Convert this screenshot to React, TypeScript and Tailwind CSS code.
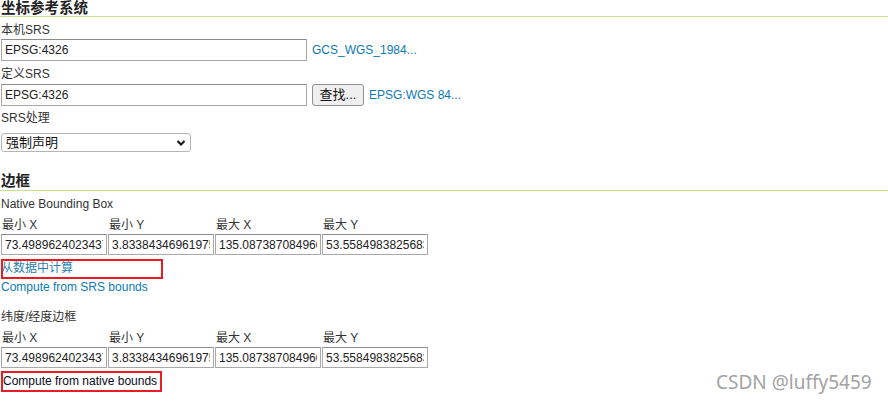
import React from "react";

const font = { fontFamily: '"Liberation Sans", "Noto Sans CJK SC", sans-serif' };

function Label(props: { children: React.ReactNode; className?: string }) {
  return <div className={`text-[12px] leading-[16px] text-[#333] ${props.className ?? ""}`}>{props.children}</div>;
}

function Heading(props: { children: React.ReactNode; className?: string }) {
  return (
    <div className={`font-bold text-[14.5px] leading-[16px] text-[#222] border-b border-[#c6df9f] pl-[1px] ${props.className ?? ""}`}>
      {props.children}
    </div>
  );
}

function TextBox(props: { value: string; className?: string }) {
  return (
    <input
      readOnly
      value={props.value}
      className={`h-[21px] border border-[#a9a9a9] border-t-[#8c8c8c] bg-white px-[3px] text-[12px] text-[#222] outline-none ${props.className ?? ""}`}
      style={font}
    />
  );
}

function BBox() {
  const cols = [
    { label: "最小 X", value: "73.4989624023437" },
    { label: "最小 Y", value: "3.83384346961975" },
    { label: "最大 X", value: "135.087387084960" },
    { label: "最大 Y", value: "53.5584983825683" },
  ];
  return (
    <div className="flex gap-[1px]">
      {cols.map((c) => (
        <div key={c.label} className="flex flex-col w-[106px]">
          <Label className="h-[17px] pl-[1px]">{c.label}</Label>
          <TextBox value={c.value} className="w-[106px] h-[21px] px-[3px]" />
        </div>
      ))}
    </div>
  );
}

export default function App() {
  return (
    <div className="relative w-[888px] h-[407px] bg-white overflow-hidden" style={font}>
      <Heading className="h-[17px]">坐标参考系统</Heading>

      <Label className="mt-[5px] pl-[1px]">本机SRS</Label>
      <div className="flex items-center mt-[1px] ml-[1px]">
        <TextBox value="EPSG:4326" className="w-[306px] h-[22px]" />
        <a className="ml-[5px] text-[12px] text-[#0d7ab4]">GCS_WGS_1984...</a>
      </div>

      <Label className="mt-[5px] pl-[1px]">定义SRS</Label>
      <div className="flex items-center mt-[2px] ml-[1px]">
        <TextBox value="EPSG:4326" className="w-[306px] h-[22px]" />
        <button className="ml-[5px] h-[22px] w-[52px] border border-[#8f8f8f] rounded-[3px] bg-[#efefef] text-[13px] text-[#111]">
          查找...
        </button>
        <a className="ml-[5px] text-[12px] text-[#0d7ab4]">EPSG:WGS 84...</a>
      </div>

      <Label className="mt-[4px] pl-[1px]">SRS处理</Label>
      <div className="mt-[7px] ml-[1px] w-[190px] h-[19px] border border-[#b5b5b5] rounded-[3px] flex items-center justify-between px-[4px] bg-white">
        <span className="text-[13px] text-[#111] leading-[16px]">强制声明</span>
        <svg width="10" height="8" viewBox="0 0 10 8">
          <path d="M1.5 2 L5 5.5 L8.5 2" fill="none" stroke="#111" strokeWidth="2" />
        </svg>
      </div>

      <Heading className="mt-[20px] h-[19px] leading-[18px]">边框</Heading>
      <Label className="mt-[5px] pl-[1px]">Native Bounding Box</Label>
      <div className="mt-[5px] ml-[1px]">
        <BBox />
      </div>
      <div className="mt-[4px] ml-[1px] w-[162px] h-[20px] border-2 border-[#e81c24] overflow-hidden">
        <span className="block -ml-[2px] text-[12px] leading-[15px] text-[#2a7fae]">从数据中计算</span>
      </div>
      <a className="block pl-[1px] text-[12px] leading-[16px] text-[#0d7ab4]">Compute from SRS bounds</a>

      <Label className="mt-[14px] pl-[1px]">纬度/经度边框</Label>
      <div className="mt-[5px] ml-[1px]">
        <BBox />
      </div>
      <div className="mt-[3px] ml-[1px] w-[161px] h-[21px] border-2 border-[#e81c24] overflow-hidden">
        <span className="block text-[12px] leading-[17px] text-[#0a0a1a] whitespace-nowrap">Compute from native bounds</span>
      </div>

      <div
        className="absolute left-[716px] top-[371px] text-[19px] text-[#a3a3a3] leading-[23px]"
        style={{ fontFamily: '"Noto Sans", sans-serif', textShadow: "0 0 1px #fff" }}
      >
        CSDN @luffy5459
      </div>
    </div>
  );
}
